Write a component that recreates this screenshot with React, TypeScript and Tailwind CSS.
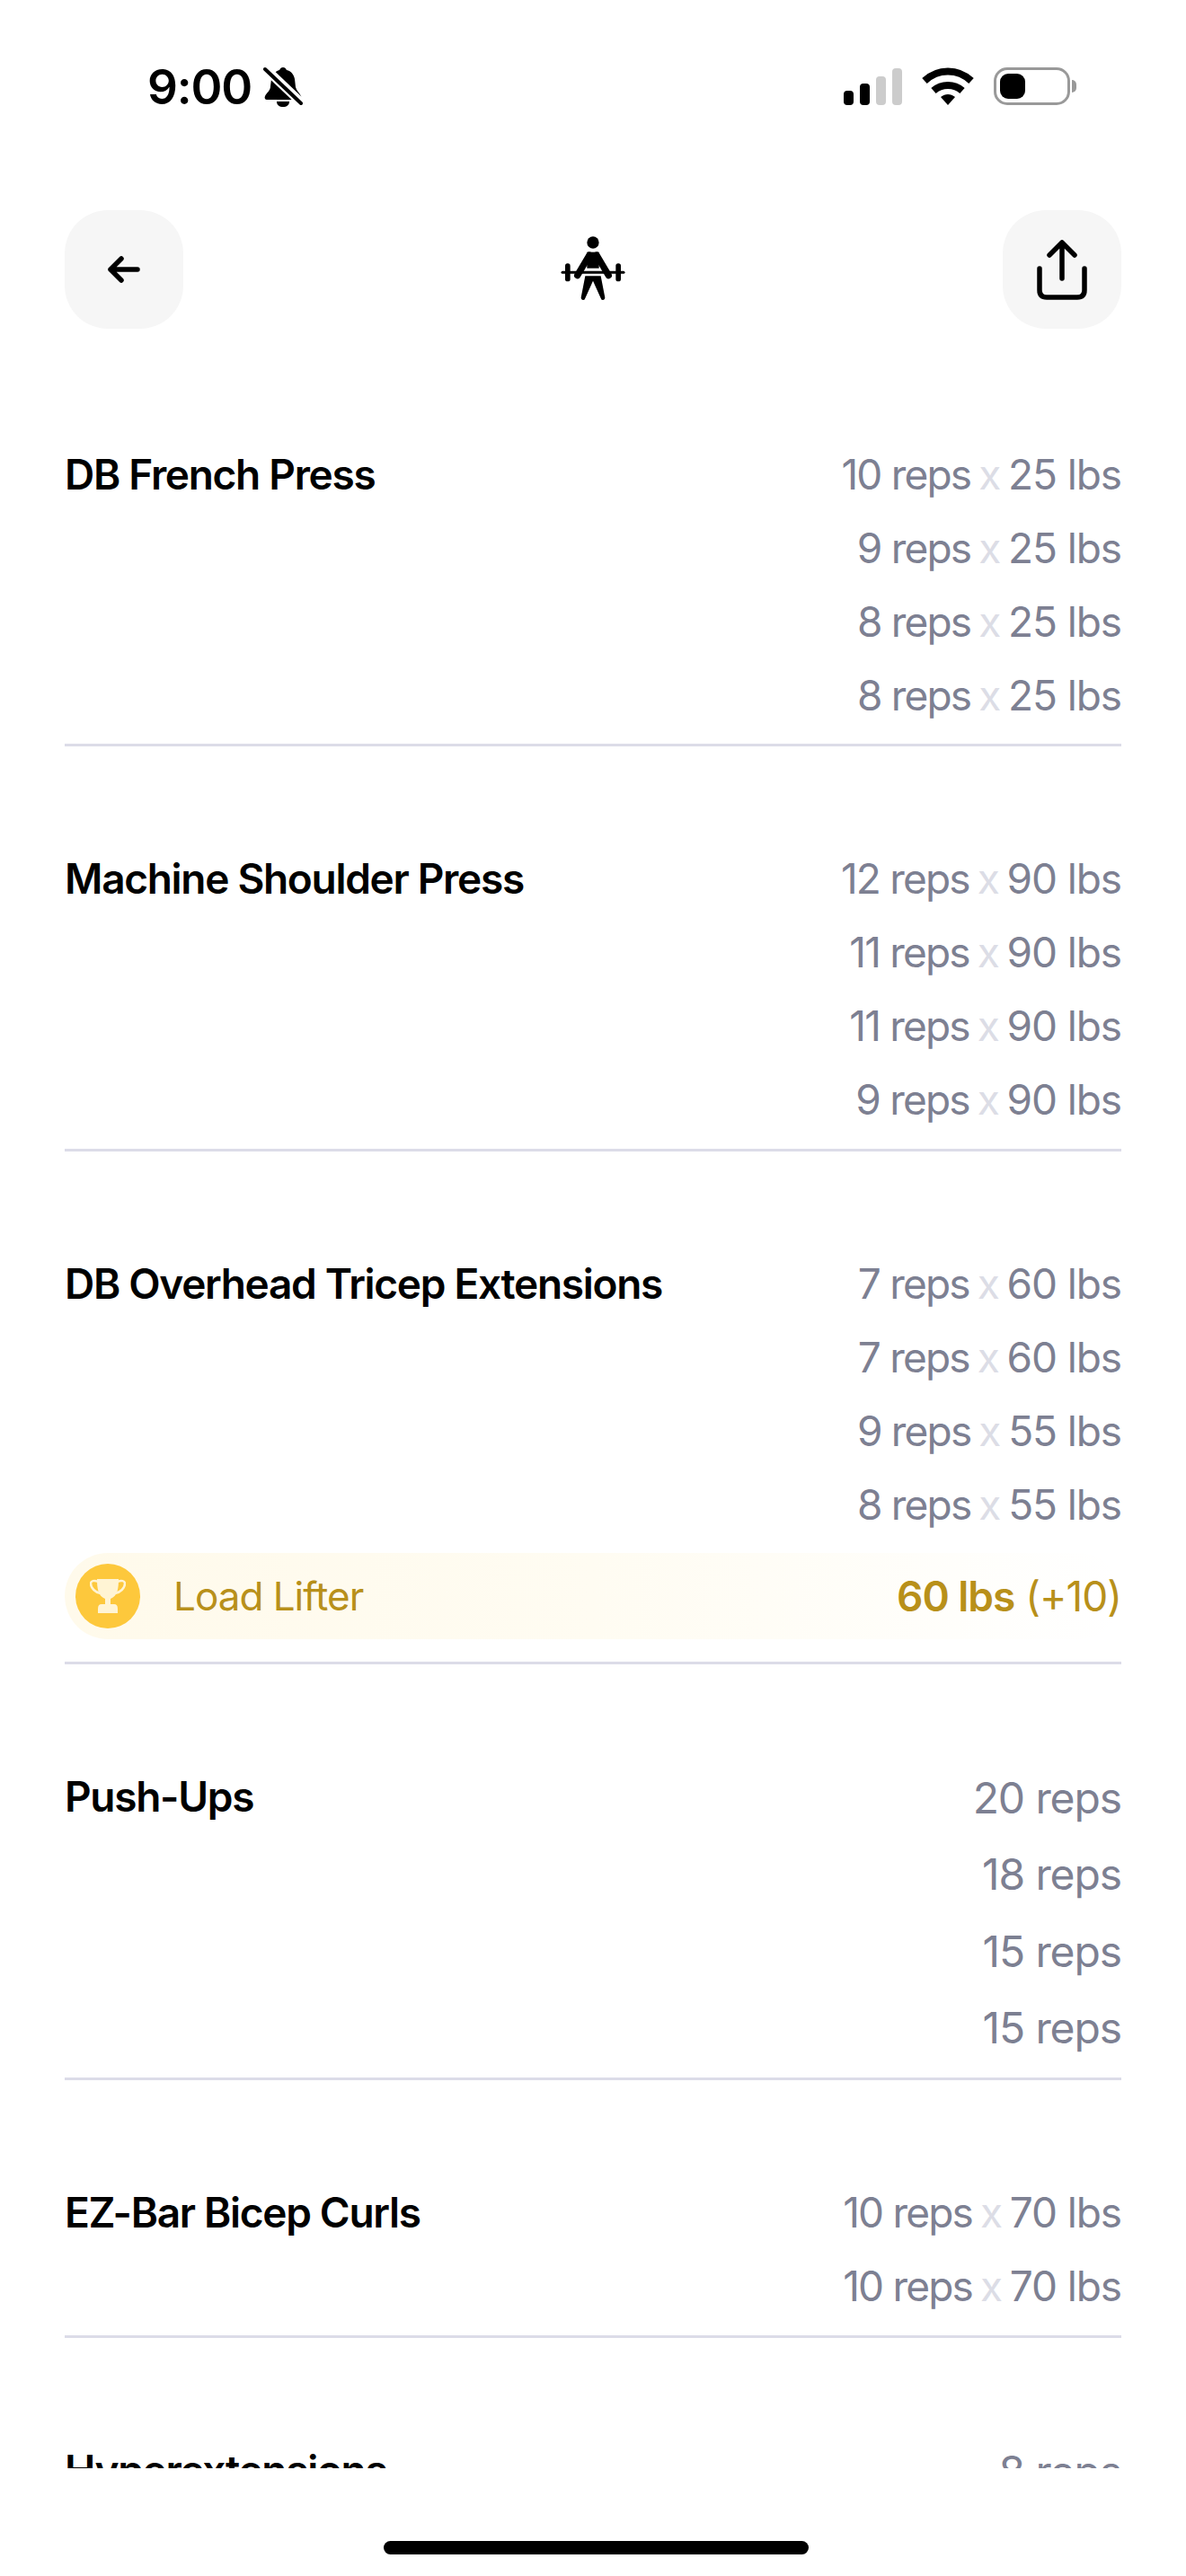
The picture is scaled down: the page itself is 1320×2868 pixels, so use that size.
const App = () => {
  return (
    <div className="relative w-[1320px] h-[2868px] overflow-hidden bg-white text-black font-['Inter',sans-serif]">
      <StatusBar />

      {/* Header */}
      <div className="mt-[94px] px-[72px] flex items-center justify-between">
        <button className="w-[132px] h-[132px] rounded-[48px] bg-[#f6f6f6] flex items-center justify-center">
          <svg width="36" height="30" viewBox="0 0 36 30" fill="none" stroke="black" strokeWidth="5.5" strokeLinecap="round" strokeLinejoin="round">
            <path d="M33 15H3M15 3 3 15l12 12" />
          </svg>
        </button>
        <LifterIcon />
        <button className="w-[132px] h-[132px] rounded-[48px] bg-[#f6f6f6] flex items-center justify-center">
          <svg width="56" height="68" viewBox="0 0 56 68" fill="none" stroke="black" strokeWidth="5.5" strokeLinecap="round" strokeLinejoin="round">
            <path d="M28 44V4M14 18 28 4l14 14M3 33v24q0 8 8 8h34q8 0 8-8V33" />
          </svg>
        </button>
      </div>

      {/* Exercises */}
      <div className="mt-[15px] h-[2367px] px-[72px] overflow-hidden">
        {exercises.map(({ name, sets, award, big, pb }) => (
          <div key={name} className="pt-[106px]">
            <div className="flex justify-between">
              <p className="text-[46px]/[82px] font-semibold tracking-[-1.3px]">{name}</p>
              <ul className={pb}>
                {sets.map(([reps, weight], i) => (
                  <li
                    key={`${name}-${i}`}
                    className={
                      big
                        ? "text-right text-[48px]/[85.3px] text-[#7d8092] tracking-[-1.1px]"
                        : "text-right text-[46px]/[82px] text-[#7d8092] tracking-[-1.1px]"
                    }
                  >
                    {weight ? <span className="tracking-[-1.8px]">{reps} reps</span> : `${reps} reps`}
                    {weight && (
                      <>
                        <span className="mx-[-3px] text-[#dcdde6]"> x </span>
                        {weight} lbs
                      </>
                    )}
                  </li>
                ))}
              </ul>
            </div>
            {award && (
              <div className="mt-[12px] mb-[25px] h-[96px] rounded-full bg-gradient-to-r from-[#fffaeb] via-[#fffcf2] via-50% to-white flex items-center pl-[12px] text-[#b8901a] text-[44px] tracking-[-1px]">
                <TrophyBadge />
                <span className="ml-[37px]">Load Lifter</span>
                <span className="ml-auto text-[46px]">
                  <span className="font-semibold">60 lbs</span> (+10)
                </span>
              </div>
            )}
            <div className="h-[3px] bg-[#dcdce8]" />
          </div>
        ))}
      </div>

      {/* Home indicator */}
      <div className="absolute left-[427px] top-[2829px] w-[473px] h-[15px] rounded-full bg-black" />
    </div>
  );
};

const StatusBar = () => (
  <div className="h-[140px] pt-[72px] pl-[164px] pr-[122px] flex items-start justify-between">
    <div className="flex items-center gap-[13px] h-[50px]">
      <span className="text-[53px]/[50px] font-semibold tracking-[-1.2px]">9:00</span>
      <svg width="44" height="46" viewBox="0 0 44 46" fill="black">
        <path d="M22 1c2 0 3 1 4 3 5 1 8 5 9 10l1 9c1 4 4 6 6 10 1 2 0 4-2 4H4c-2 0-3-2-2-4 2-4 6-6 6-11l1-8c1-5 5-9 9-10 1-2 2-3 4-3Z" />
        <path d="M15 39h14c0 4-3 6-7 6s-7-2-7-6Z" />
        <path d="M1 1 43 41" stroke="white" strokeWidth="10" />
        <path d="M2 3 42 41" stroke="black" strokeWidth="4" strokeLinecap="round" />
      </svg>
    </div>
    <div className="flex items-center gap-[22px] pt-[3px]">
      <div className="flex items-end gap-[7px] h-[41px]">
        <div className="w-[11px] h-[16px] rounded-[4px] bg-black" />
        <div className="w-[11px] h-[24px] rounded-[4px] bg-black" />
        <div className="w-[11px] h-[32px] rounded-[4px] bg-[#cccccc]" />
        <div className="w-[11px] h-[41px] rounded-[4px] bg-[#cccccc]" />
      </div>
      <svg width="58" height="42" viewBox="0 0 58 42" fill="none" stroke="black">
        <path d="M3 15C18 1 40 1 55 15" strokeWidth="8" />
        <path d="M13 26c9-8 23-8 32 0" strokeWidth="8" />
        <path d="M21 33c5-4 11-4 16 0l-8 9Z" fill="black" strokeWidth="0" />
      </svg>
      <div className="flex items-center gap-[2px]">
        <div className="w-[85px] h-[42px] rounded-[15px] border-[3px] border-[#999999] p-[4px]">
          <div className="w-[28px] h-full rounded-[9px] bg-black" />
        </div>
        <div className="w-[5px] h-[14px] rounded-r-full bg-[#999999]" />
      </div>
    </div>
  </div>
);

const LifterIcon = () => (
  <svg width="120" height="100" viewBox="0 0 360 300">
    <circle cx="180" cy="60" r="20" />
    <path d="M160 92h40v54h-40z" />
    <path d="M168 102 128 170M192 102l40 68" stroke="black" strokeWidth="22" strokeLinecap="round" />
    <path d="M78 160h204" stroke="black" strokeWidth="9" strokeLinecap="round" />
    <rect x="87" y="130" width="17" height="60" rx="8" />
    <rect x="256" y="130" width="17" height="60" rx="8" />
    <path d="M154 172h52l14 72a7 7 0 0 1-14 2l-26-58-26 58a7 7 0 0 1-14-2Z" />
  </svg>
);

const TrophyBadge = () => (
  <div className="w-[72px] h-[72px] rounded-full bg-[#fdc83c] flex items-center justify-center shrink-0">
    <svg width="40" height="38" viewBox="0 0 40 38" fill="#fff4d4">
      <path d="M8 0h24c0 10-1 19-9 22v6h-6v-6C9 19 8 10 8 0Z" />
      <path d="M9 3C5 1 1 2 1 5c0 5 5 10 11 11" fill="none" stroke="#fff4d4" strokeWidth="2.5" />
      <path d="M31 3c4-2 8-1 8 2 0 5-5 10-11 11" fill="none" stroke="#fff4d4" strokeWidth="2.5" />
      <path d="M13 28h14q4 0 4 5v5H9v-5q0-5 4-5Z" />
    </svg>
  </div>
);

const s = (reps: number, weight?: number): [number, number | undefined] => [reps, weight];

const exercises = [
  { name: "DB French Press", sets: [s(10, 25), s(9, 25), s(8, 25), s(8, 25)], pb: "pb-[13px]" },
  { name: "Machine Shoulder Press", sets: [s(12, 90), s(11, 90), s(11, 90), s(9, 90)], pb: "pb-[14px]" },
  { name: "DB Overhead Tricep Extensions", sets: [s(7, 60), s(7, 60), s(9, 55), s(8, 55)], award: true, pb: "pb-[1px]" },
  { name: "Push-Ups", sets: [s(20), s(18), s(15), s(15)], big: true, pb: "pb-[13px]" },
  { name: "EZ-Bar Bicep Curls", sets: [s(10, 70), s(10, 70)], pb: "pb-[14px]" },
  { name: "Hyperextensions", sets: [s(8), s(8)], big: true, pb: "pb-[12px]" },
];

export default App;
